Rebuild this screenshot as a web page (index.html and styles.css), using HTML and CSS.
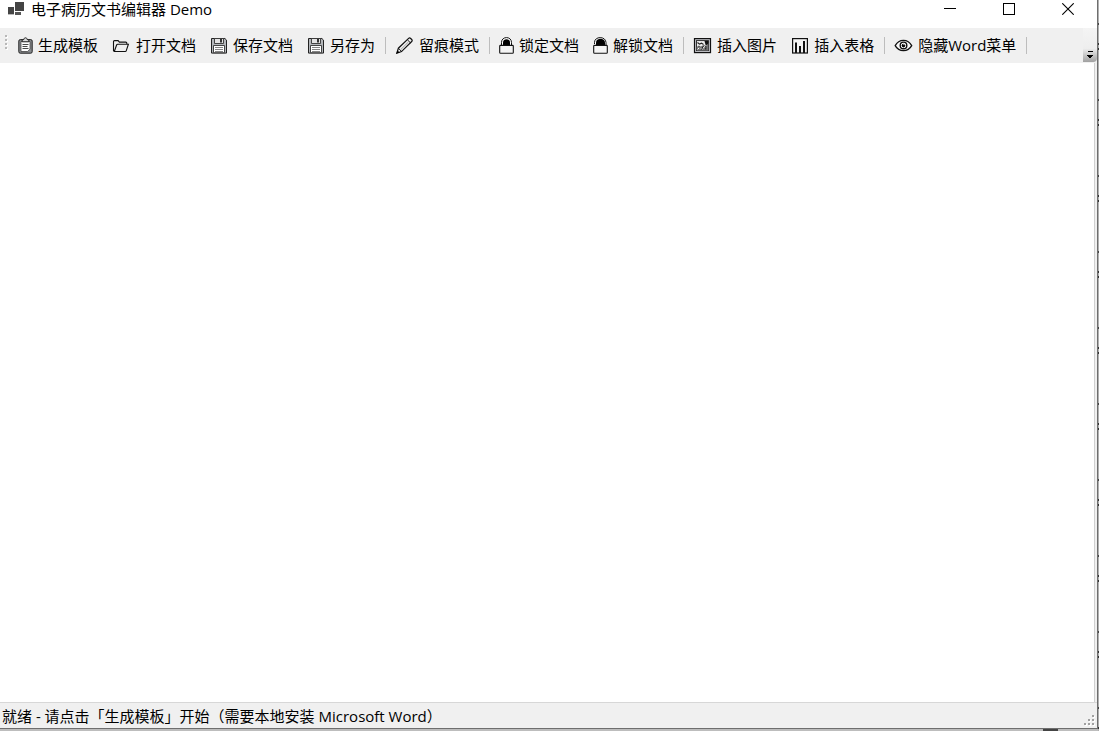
FILE: index.html
```html
<!DOCTYPE html>
<html lang="zh-CN">
<head>
  <meta charset="UTF-8">
  <title>电子病历文书编辑器 Demo</title>
  <link rel="stylesheet" href="styles.css">
</head>
<body>
  <div class="window">
    <header class="titlebar">
      <svg class="app-icon" width="16" height="17" viewBox="0 0 16 17">
        <rect x="0" y="7" width="6" height="7" fill="#444"/>
        <rect x="7" y="2" width="9" height="9" fill="#444"/>
        <rect x="0" y="14" width="6" height="1" fill="#bbb"/>
        <rect x="7" y="12" width="6" height="3" fill="#555"/>
      </svg>
      <h1 class="title">电子病历文书编辑器 Demo</h1>
      <div class="window-buttons">
        <button class="window-btn" aria-label="最小化">
          <svg width="12" height="12" viewBox="0 0 12 12"><path d="M0 5.5H12" stroke="#000"/></svg>
        </button>
        <button class="window-btn" aria-label="最大化">
          <svg width="12" height="12" viewBox="0 0 12 12"><rect x=".5" y=".5" width="11" height="11" fill="none" stroke="#000"/></svg>
        </button>
        <button class="window-btn" aria-label="关闭">
          <svg width="12" height="12" viewBox="0 0 12 12"><path d="M.3.3L11.7 11.7M11.7.3L.3 11.7" stroke="#000" stroke-width="1.1"/></svg>
        </button>
      </div>
    </header>

    <nav class="toolbar">
      <svg class="grip" width="3" height="16" viewBox="0 0 3 16">
        <path d="M1 1h2v2H1zM1 5h2v2H1zM1 9h2v2H1zM1 13h2v2H1z" fill="#fff"/>
        <path d="M0 0h2v2H0zM0 4h2v2H0zM0 8h2v2H0zM0 12h2v2H0z" fill="#b8b8b8"/>
      </svg>
      <div class="group">
        <button class="tool">
          <svg width="15" height="17" viewBox="0 0 15 17">
            <rect x=".8" y="2.6" width="13.4" height="13.6" rx="1.5" fill="#8a8d90" stroke="#222"/>
            <path d="M3 4.5h9v7.7l-2.5 2.3H3z" fill="#fff" stroke="#333" stroke-width=".7"/>
            <path d="M4.2 4.8V2.6h1.6C5.8.2 9.2.2 9.2 2.6h1.6v2.2z" fill="#ddd" stroke="#222"/>
            <path d="M4.5 7.5h6M4.5 9.5h5M4.5 11.5h6" stroke="#333" stroke-width=".9"/>
          </svg>
          <span>生成模板</span>
        </button>
        <button class="tool">
          <svg width="19" height="17" viewBox="0 0 19 17">
            <path d="M1.5 14V4.6q0-1 1-1h3.6l1.3 1.5h6.4q1 0 1 1v1M1.5 14.5h11.8q.7 0 .9-.7l2.2-6.6H5.7q-.8 0-1.1.8L2.4 14.3" fill="none" stroke="#111" stroke-width="1.1"/>
          </svg>
          <span>打开文档</span>
        </button>
        <button class="tool">
          <svg width="18" height="17" viewBox="0 0 18 17">
            <path d="M1.5 1.5h13.4l1.6 1.6v13H1.5z" fill="#b4b7bb" stroke="#222"/>
            <path d="M4.5 1.5h9v5h-9z" fill="#e4e4e4" stroke="#333" stroke-width=".9"/>
            <path d="M10 2h2v3.6h-2z" fill="#333"/>
            <path d="M3.5 8.5h11v7.2h-11z" fill="#fff" stroke="#333" stroke-width=".9"/>
            <path d="M5 10.5h8M5 12.5h8M5 14.5h8" stroke="#666" stroke-width=".8"/>
          </svg>
          <span>保存文档</span>
        </button>
        <button class="tool">
          <svg width="18" height="17" viewBox="0 0 18 17">
            <path d="M1.5 1.5h13.4l1.6 1.6v13H1.5z" fill="#b4b7bb" stroke="#222"/>
            <path d="M4.5 1.5h9v5h-9z" fill="#e4e4e4" stroke="#333" stroke-width=".9"/>
            <path d="M10 2h2v3.6h-2z" fill="#333"/>
            <path d="M3.5 8.5h11v7.2h-11z" fill="#fff" stroke="#333" stroke-width=".9"/>
            <path d="M5 10.5h8M5 12.5h8M5 14.5h8" stroke="#666" stroke-width=".8"/>
          </svg>
          <span>另存为</span>
        </button>
      </div>
      <div class="group">
        <button class="tool">
          <svg width="19" height="17" viewBox="0 0 19 17">
            <path d="M1.8 16.2l1.6-5L13.6 1.4q1-.9 2.1.1l1 1q1 1 0 2L6.5 14.6z" fill="#f0f0f0" stroke="#111" stroke-width="1.2"/>
            <path d="M12.4 2.8l3.1 3.1M3.5 11.3l3 3.1" fill="none" stroke="#111"/>
            <path d="M6 12.3L13.2 5.2" stroke="#888" stroke-width=".8"/>
            <path d="M1.4 16.6l1.1-3.2 2.3 2.1z" fill="#000"/>
          </svg>
          <span>留痕模式</span>
        </button>
      </div>
      <div class="group">
        <button class="tool">
          <svg width="15" height="17" viewBox="0 0 15 17">
            <path d="M2.5 9V5.4C2.5-1 12.5-1 12.5 5.4V9" fill="#fff" stroke="#111"/>
            <path d="M4 8.5V5.6c0-4.4 7-4.4 7 0v2.9z" fill="#000"/>
            <rect x=".7" y="8.4" width="13.6" height="7.8" rx=".8" fill="#f4f4f4" stroke="#111" stroke-width="1.1"/>
          </svg>
          <span>锁定文档</span>
        </button>
        <button class="tool">
          <svg width="15" height="17" viewBox="0 0 15 17">
            <path d="M1.5 7V5.4C1.5-1 12.8-1 13 5.4V8" fill="#fff" stroke="#111"/>
            <path d="M3 8.5V5.6c0-5 9-5 9 0v2.9z" fill="#000"/>
            <rect x=".7" y="8.4" width="13.6" height="7.8" rx=".8" fill="#f4f4f4" stroke="#111" stroke-width="1.1"/>
          </svg>
          <span>解锁文档</span>
        </button>
      </div>
      <div class="group">
        <button class="tool">
          <svg width="19" height="17" viewBox="0 0 19 17">
            <rect x="1.5" y="1.6" width="16" height="14" fill="#c4c5ca" stroke="#111" stroke-width="1.2"/>
            <rect x="3.5" y="3.6" width="12" height="10" fill="#eee" stroke="#222" stroke-width=".9"/>
            <path d="M3.7 13.4V10l2-1.4 2.2.8 3-1.6 2 1.2 2.4-3v7.4z" fill="#777"/>
            <path d="M11.5 4h3.6v3l-2.4 1.4z" fill="#111"/>
            <path d="M4.5 5.5l2 1.6 2-1 2 1.4" fill="none" stroke="#222" stroke-width="1.2"/>
            <path d="M4.5 12.4l2.5-2.3 2 2.3 2.3-2.8 1.6 1.2" fill="none" stroke="#fff"/>
            <path d="M6 9.5l1.5 1.5M8.5 12.7l1.8-3.5M12.8 12.5V9.3" stroke="#111"/>
          </svg>
          <span>插入图片</span>
        </button>
        <button class="tool">
          <svg width="18" height="17" viewBox="0 0 18 17">
            <rect x="1.6" y="1.6" width="14.8" height="14.4" fill="#f4f4f4" stroke="#111" stroke-width="1.2"/>
            <path d="M4 5.5h2V16H4zM8 9h2v7H8zM12 4h2v12h-2z" fill="#111"/>
          </svg>
          <span>插入表格</span>
        </button>
      </div>
      <div class="group">
        <button class="tool">
          <svg width="19" height="17" viewBox="0 0 19 17">
            <path d="M1.2 8.6C5 1.5 13.9 1.5 17.7 8.6C13.9 15.4 5 15.4 1.2 8.6z" fill="#f8f8f8" stroke="#111" stroke-width="1.3"/>
            <circle cx="9.5" cy="8.4" r="3.3" fill="#fff" stroke="#111" stroke-width="1.4"/>
            <circle cx="9.5" cy="8.6" r="1.8" fill="#000"/>
            <circle cx="10" cy="7.6" r=".7" fill="#fff"/>
          </svg>
          <span>隐藏Word菜单</span>
        </button>
      </div>
      <button class="overflow" aria-label="更多">
        <svg width="7" height="8" viewBox="0 0 7 8"><path d="M1 0h5v1H1zM0 4h6v1H5v1H4v1H2V6H1V5H0z" fill="#000"/></svg>
      </button>
    </nav>

    <main class="document"></main>

    <footer class="statusbar">
      <span>就绪 - 请点击「生成模板」开始（需要本地安装 Microsoft Word）</span>
      <svg class="size-grip" width="12" height="12" viewBox="0 0 12 12">
        <path d="M9 1h2v2H9zM5 5h2v2H5zM9 5h2v2H9zM1 9h2v2H1zM5 9h2v2H5zM9 9h2v2H9z" fill="#fff"/>
        <path d="M8 0h2v2H8zM4 4h2v2H4zM8 4h2v2H8zM0 8h2v2H0zM4 8h2v2H4zM8 8h2v2H8z" fill="#a0a0a0"/>
      </svg>
    </footer>
  </div>
</body>
</html>
```
FILE: styles.css
```css
* {
  box-sizing: border-box;
}

/* The desktop shows as a thin strip right of and below the window */
body {
  margin: 0;
  height: 100vh;
  padding: 0 1px 2px 0;
  background:
    linear-gradient(#333 0 2px, #b0b0b0 2px 5px, #333 5px 7px, #b0b0b0 7px 56px, #444 56px 58px, #b0b0b0 58px) right 43px / 1px 76px repeat-y,
    linear-gradient(#444, #444) 1043px bottom / 15px 2px no-repeat,
    #bdbdbd;
  color: #000;
  font-family: "Open Sans", "Noto Sans CJK SC", sans-serif;
  font-size: 15px;
  line-height: 18px;
}

button {
  border: 0;
  padding: 0;
  background: none;
  color: inherit;
  font: inherit;
}

svg {
  display: block;
  flex: none;
}

.window {
  display: flex;
  flex-direction: column;
  height: 100%;
  background-color: #fff;
  border-right: 1px solid #6e6e6e;
  border-bottom: 1px solid #6e6e6e;
}

.titlebar {
  display: flex;
  align-items: flex-start;
  height: 28px;
  padding-left: 8px;
}

.title {
  margin: 0 0 0 7px;
  font-size: 15px;
  font-weight: normal;
}

.window-buttons {
  display: flex;
  margin-left: auto;
}

.window-btn {
  display: flex;
  justify-content: center;
  width: 59px;
  height: 28px;
  padding-top: 3px;
}

.toolbar {
  display: flex;
  align-items: stretch;
  height: 35px;
  padding-left: 5px;
  background-color: #f0f0f0;
  white-space: nowrap;
}

.grip {
  margin: 7px 10px 0 0;
}

.group {
  display: flex;
  align-items: center;
  gap: 14px;
  margin-right: 9px;
  padding-right: 11px;
  background: linear-gradient(#bdbdbd, #bdbdbd) right center / 1px 17px no-repeat;
}

.tool {
  display: flex;
  align-items: center;
  gap: 5px;
}

.tool span {
  padding-bottom: 2px;
}

.overflow {
  display: flex;
  justify-content: center;
  align-items: flex-end;
  width: 14px;
  height: 34px;
  margin-left: auto;
  padding-bottom: 3px;
  border-radius: 0 0 4px 0;
  background: linear-gradient(#f4f4f4 0, #eee 60%, #a0a0a0);
}

.document {
  flex: 1;
  border-right: 2px solid #f0f0f0;
  box-shadow: inset -1px 0 #d0d0d0;
}

.statusbar {
  display: flex;
  justify-content: space-between;
  height: 26px;
  padding: 4px 1px 0 2px;
  background-color: #f0f0f0;
  border-top: 1px solid #d7d7d7;
}

.size-grip {
  align-self: flex-end;
  margin-bottom: 1px;
}
```
